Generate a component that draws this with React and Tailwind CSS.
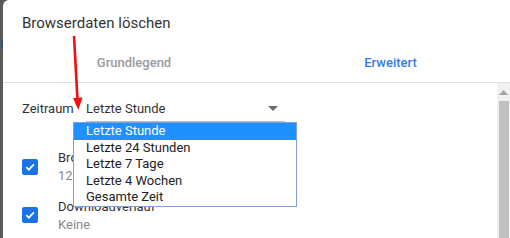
import React from "react";

function Check() {
  return (
    <div className="w-[16px] h-[16px] rounded-[2px] bg-[#1a73e8] flex items-center justify-center shrink-0">
      <svg width="12" height="12" viewBox="0 0 12 12">
        <path d="M2.2 6.2 L4.8 8.7 L9.9 3.4" fill="none" stroke="white" strokeWidth="1.8" />
      </svg>
    </div>
  );
}

export default function App() {
  const items = ["Letzte Stunde", "Letzte 24 Stunden", "Letzte 7 Tage", "Letzte 4 Wochen", "Gesamte Zeit"];
  return (
    <div className="relative w-[510px] h-[238px] bg-[#5a5a5a] overflow-hidden" style={{ fontFamily: "Roboto, 'Liberation Sans', sans-serif" }}>
      <div className="absolute left-0 top-[36px] text-[12px] text-[#1a4fa0]">t</div>
      <div className="relative ml-[3px] h-full bg-white rounded-tl-[6px] flex flex-col">
        <div className="pl-[19px] pt-[12px] h-[40px] text-[15px] text-[#333]">Browserdaten löschen</div>
        <div className="flex h-[42px] text-[13px] font-medium">
          <div className="w-[262px] flex items-center justify-center pt-[3px] text-[#9a9a9a]">Grundlegend</div>
          <div className="flex-1 flex items-center justify-center pt-[3px] text-[#3b7be8] pl-[6px]">Erweitert</div>
        </div>
        <div className="h-[1px] bg-[#e0e0e0]" />
        <div className="flex flex-1">
          <div className="flex-1 flex flex-col pl-[19px] text-[13px] text-[#333]">
            <div className="flex items-end h-[39px]">
              <span className="w-[64px] pb-[4px]">Zeitraum</span>
              <div className="w-[199px] flex items-center justify-between border-b border-[#bdbdbd] pb-[3px]">
                <span>Letzte Stunde</span>
                <svg width="10" height="5" viewBox="0 0 10 5" className="mr-[7px]"><path d="M0 0 L10 0 L5 5 Z" fill="#6b6b6b" /></svg>
              </div>
            </div>
            <div className="flex items-start mt-[27px]">
              <div className="mt-[10px]"><Check /></div>
              <div className="ml-[20px] flex flex-col leading-[18px]">
                <span>Browserverlauf</span>
                <span className="text-[#8a8a8a]">12 Elemente</span>
              </div>
            </div>
            <div className="flex items-start mt-[13px]">
              <div className="mt-[9px]"><Check /></div>
              <div className="ml-[20px] flex flex-col leading-[18px]">
                <span>Downloadverlauf</span>
                <span className="text-[#8a8a8a]">Keine</span>
              </div>
            </div>
          </div>
          <div className="w-[13px] bg-[#f1f1f1] flex flex-col items-center">
            <svg width="9" height="6" viewBox="0 0 9 6" className="mt-[7px]"><path d="M0 5 L9 5 L4.5 0 Z" fill="#a3a3a3" /></svg>
            <div className="mt-[5px] w-[10px] flex-1 bg-[#c1c1c1]" />
          </div>
        </div>
      </div>

      {/* dropdown list overlay */}
      <div className="absolute left-[73px] top-[122px] w-[224px] h-[85px] bg-white border border-[#7f9fd9] flex flex-col text-[13px] text-[#222]" style={{ fontFamily: "Roboto, 'Liberation Sans', sans-serif" }}>
        {items.map((t, i) => (
          <div key={t} className={"h-[16.6px] leading-[16.6px] pl-[12px] " + (i === 0 ? "bg-[#1e90ff] text-white" : "")}>{t}</div>
        ))}
      </div>

      {/* red annotation arrow */}
      <svg className="absolute left-0 top-0" width="510" height="238" viewBox="0 0 510 238">
        <line x1="74" y1="36" x2="77.5" y2="100" stroke="#f01010" strokeWidth="2.6" />
        <path d="M73 98 L82.5 97.5 L78.3 110 Z" fill="#f01010" />
      </svg>
    </div>
  );
}
